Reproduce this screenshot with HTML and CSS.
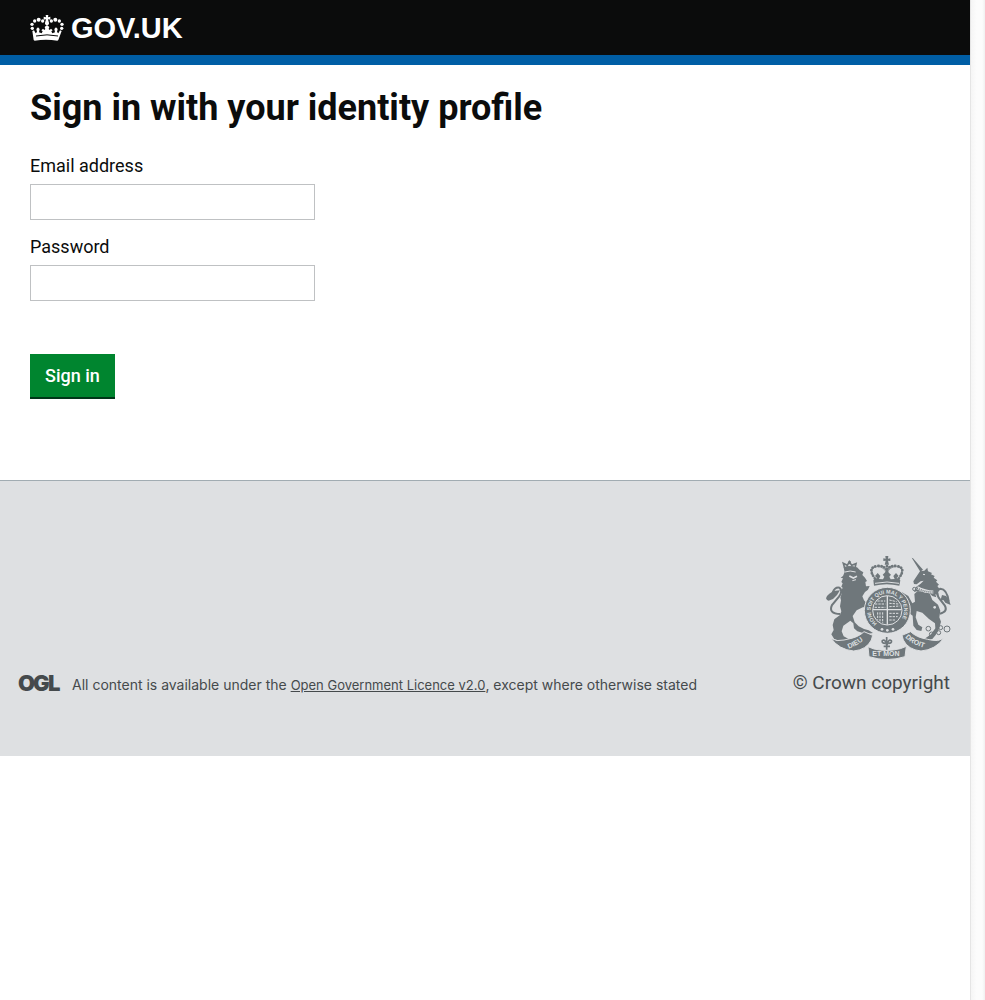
FILE: index.html
```html
<!DOCTYPE html>
<html lang="en">
<head>
<meta charset="utf-8">
<meta name="viewport" content="width=device-width, initial-scale=1">
<title>Sign in with your identity profile</title>
<link rel="stylesheet" href="styles.css">
</head>
<body>
<div class="window">
<div class="page">
  <header class="header">
    <a class="brand" href="#">
      <svg class="brand-crown" viewBox="0 0 102 78" aria-hidden="true">
        <g fill="#fff">
          <path d="M47 0h8l-1 7 7-2v9l-7-1 2 8-2 8h-6l-2-8 2-8-7 1V5l7 2z"/>
          <circle cx="51" cy="25" r="6"/>
          <circle cx="38" cy="18" r="5"/><circle cx="26" cy="14" r="6"/><circle cx="14" cy="18" r="5"/><circle cx="6" cy="28" r="5"/><circle cx="7" cy="40" r="5"/>
          <circle cx="64" cy="18" r="5"/><circle cx="76" cy="14" r="6"/><circle cx="88" cy="18" r="5"/><circle cx="96" cy="28" r="5"/><circle cx="95" cy="40" r="5"/>
          <path d="M7 48l5-2 5 9 4-4-2-9 5-5 5 5-2 10 8 3 3-6-4-3 5-5 4 4 3-3-2-6 7-6 7 6-2 6 3 3 4-4 5 5-4 3 3 6 8-3-2-10 5-5 5 5-2 9 4 4 5-9 5 2-10 27-3 2q-34-6-68 0l-3-2z"/>
        </g>
        <path d="M18 63q33-7 66 0" fill="none" stroke="#0b0c0c" stroke-width="3"/>
      </svg>
      <span>GOV.UK</span>
    </a>
  </header>
  <main class="content">
    <h1>Sign in with your identity profile</h1>
    <form>
      <div class="field">
        <label for="email">Email address</label>
        <input id="email" name="email" type="email">
      </div>
      <div class="field">
        <label for="password">Password</label>
        <input id="password" name="password" type="password">
      </div>
      <button class="submit" type="submit">Sign in</button>
    </form>
  </main>
  <footer class="footer">
    <div class="licence">
      <svg class="ogl" viewBox="0 0 41 18" role="img" aria-label="OGL"><text class="ogl-text" x="-1 14 29" y="16">OGL</text></svg>
      <p>All content is available under the <a href="#">Open Government Licence v2.0</a>, except where otherwise stated</p>
    </div>
    <a class="copyright" href="#">
      <svg class="crest" viewBox="30 30 375 312" aria-hidden="true">
        <defs>
          <path id="garter" d="M186 235A50 50 0 1 1 248 235"/>
          <path id="left-ribbon" d="M101 311Q134 299 158 274"/>
          <path id="right-ribbon" d="M270 277Q296 303 340 311"/>
        </defs>
        <g fill="#6f777b">
          <!-- lion -->
          <path d="M89 81l-5 12-7 5 7 2-5 11 4 4-4 10 4 3-6 13 3 5-4 12 2 8-3 18 4 15-4 11-17 13-5 17 3 15-7 13 9 15 23 6 19 1 1-8-15-8-6-15 5-17 21-15 9 8 2 15 10 9 27 8 20-3-13-8-14-4-16-8-12-12-6-19 12-17 20-10 12 8 4-12-14-16-5-12 8-13 9-7 5-11-11 1-2-13 5-3-6-10-8-8 3-8-10-6-9-9-17-3q-14-2-23 3z"/>
          <path d="M33 160l3-7 7-7 12-8 20-2-9 14-12 12-13 5-5-2z"/>
          <!-- unicorn -->
          <path d="M290 38l4 2 30 34-8 6zM315 79l13-2 9-9 2 11 12 5-3 4 11 5-3 5 11 8-4 4 9 9-5 4 7 10-7 3 4 13-10-1 3 9-12-4-10-10-34-5-11 3 5-14 14-10 10-10-9 2-12 9-8-1-2-8 13-20z"/>
          <path d="M308 138l36 7 8 20 17 14 7 18-3 20 5 13-6 22-10 18-10 12-17 4-6-5 19-13 13-18-1-15-18-13-20-19-17-5-3 19 8 22 12 8-3 11-14-3-10-13-2-30-8-6-5-18-16 4-11-11 10-4 13 2-4-14-19-4-5-11 12-9 20 12 12 22 8-5-2-23z"/>
          <path d="M381 150l12 3 10 14 4 13-9-4-7-3-6-8-9 2z"/>
          <!-- royal crown -->
          <path d="M211 33h9l-1 8 7-1v8l-7-1 3 12h-13l3-12-7 1v-8l7 1z"/>
          <path d="M175 106l11-7-6-6 8-9 8 9-4 9 12 1 4-8-5-6 12-12 13 12-5 6 4 8 12-1-4-9 8-9 8 9-6 6 11 7-3 16q-38-9-76 0z"/>
          <circle cx="217" cy="196" r="69" stroke="#dee0e2" stroke-width="3"/>
          <!-- ribbons -->
          <g stroke="#dee0e2" stroke-width="3">
            <path d="M48 280q17 11 39 5l9-2q35-6 51-23l26 11-4 14q-14 29-53 33-44-4-68-38z"/>
            <path d="M386 280q-17 11-39 5l-9-2q-35-6-51-23l-26 11 4 14q14 29 53 33 44-4 68-38z"/>
            <path d="M159 305l18 7q39 9 79-1l18-7-4 31q-54 17-108 0z"/>
          </g>
        </g>
        <g fill="none" stroke="#6f777b">
          <path d="M90 73l-5-18 12 6 6-11 7 11 13-5-4 17" stroke-width="5"/>
          <path d="M104 48v10M89 75q15-6 32 0M94 67h22" stroke-width="6"/>
          <path d="M76 207q-37-1-25-27l21-25q13-18 1-27-14-2-20 15" stroke-width="6"/>
          <path d="M375 206q25-6 14-25l-18-23q-11-20 5-27 20 1 25 38" stroke-width="6"/>
          <path d="M180 101q-25-34 7-38 22-2 29 15M251 101q25-34-7-38-22-2-29 15M216 63v22" stroke-width="8" stroke-linecap="round" stroke-dasharray="1 8"/>
          <path d="M180 101q-22-34 7-36 22 0 28 22M251 101q22-34-7-36-22 0-28 22" stroke-width="2"/>
          <g stroke-width="3"><circle cx="340" cy="251" r="7"/><circle cx="350" cy="268" r="7"/><circle cx="371" cy="263" r="6"/><circle cx="377" cy="248" r="6"/><circle cx="396" cy="252" r="9"/><circle cx="298" cy="132" r="5"/></g>
          <path d="M215 276v38M206 304h19M215 300q-4-19-13-13-3 8 9 8M216 300q4-19 13-13 3 8-9 8" stroke-width="5"/>
        </g>
        <g fill="none" stroke="#dee0e2">
          <circle cx="217" cy="196" r="44" stroke-width="3"/>
          <path d="M217 153v86M174 194h86" stroke-width="4"/>
          <path d="M187 168h24M180 177h31M179 187h32M223 165l22 5M223 175l28 2M223 185l31-2M188 202v22M195 202v28M203 202v32M223 205h29M223 215h25M223 225h18" stroke-width="3" stroke-dasharray="7 3"/>
          <path d="M180 115q36-8 72 0" stroke-width="3"/>
          <path d="M90 81q15-6 32 0M112 107l11-3" stroke-width="3"/>
          <path d="M103 93l12 6 11-5" stroke-width="5"/>
          <path d="M306 128q24 13 49 13" stroke-width="9"/>
          <path d="M324 88l6 1" stroke-width="3"/>
        </g>
        <path d="M306 129q24 13 49 12" fill="none" stroke="#6f777b" stroke-width="5" stroke-dasharray="3 3"/>
        <g fill="#dee0e2"><circle cx="201" cy="253" r="4"/><circle cx="217" cy="256" r="4"/><circle cx="234" cy="253" r="4"/><circle cx="359" cy="187" r="4"/></g>
        <text class="motto"><textPath href="#garter">HONI SOIT QUI MAL Y PENSE</textPath></text>
        <text class="ribbon-text"><textPath href="#left-ribbon">DIEU</textPath></text>
        <text class="ribbon-text"><textPath href="#right-ribbon">DROIT</textPath></text>
        <text class="ribbon-text" x="172" y="334">ET MON</text>
      </svg>
      <span>© Crown copyright</span>
    </a>
  </footer>
</div>
<div class="gutter" aria-hidden="true"></div>
</div>
</body>
</html>
```
FILE: styles.css
```css
* { box-sizing: border-box; }
body { margin: 0; background: #fff; color: #0b0c0c; font-family: Roboto, "Liberation Sans", sans-serif; font-size: 19px; line-height: 25px; }
.window { display: grid; grid-template-columns: minmax(0, 1fr) 15px; min-height: 100vh; }
.gutter { border-left: 1px solid #e5e5e5; background: linear-gradient(to right, #f5f5f5, #fcfcfc 40%, #fcfcfc 80%, #f0f0f0); }
.header { display: flex; align-items: center; height: 65px; padding: 0 30px; background: #0b0c0c; border-bottom: 10px solid #005ea5; }
.brand { display: flex; align-items: center; gap: 7px; color: #fff; font: bold 29px/30px "Liberation Sans", Arial, sans-serif; text-decoration: none; }
.brand-crown { width: 34px; height: 26px; }
.content { padding: 23px 30px 81px; }
h1 { margin: 0 0 25px; font-size: 36px; line-height: 40px; font-weight: 700; }
.field { display: flex; flex-direction: column; align-items: flex-start; gap: 6px; margin-bottom: 14px; font-size: 18px; }
.field input { width: 285px; max-width: 100%; height: 36px; padding: 5px; border: 1px solid #bfc1c3; border-radius: 0; background: #fff; font: inherit; }
.submit { display: block; margin-top: 53px; height: 45px; padding: 0 15px; border: 0; border-bottom: 2px solid #003618; background: #00852f; color: #fff; font: 500 18px/25px Roboto, sans-serif; }
.footer { display: flex; flex-wrap: wrap; justify-content: space-between; align-items: flex-end; gap: 20px; padding: 74px 20px 61px 19px; border-top: 1px solid #a1acb2; background: #dee0e2; color: #454a4c; }
.licence { display: flex; align-items: flex-start; gap: 12px; font: 14px/20px Inter, Roboto, sans-serif; }
.licence p { margin: 0; }
.licence a { color: inherit; font-size: 13px; }
.ogl { flex: none; width: 41px; height: 18px; overflow: visible; }
.ogl-text { font: 900 22px Inter, sans-serif; fill: #454a4c; }
.copyright { display: flex; flex-direction: column; align-items: flex-end; gap: 11px; color: inherit; text-decoration: none; }
.crest { width: 125px; height: 104px; overflow: visible; }
.motto { font: bold 16px "Liberation Sans", sans-serif; fill: #dee0e2; }
.ribbon-text { font: bold 21px "Liberation Sans", sans-serif; fill: #dee0e2; }
```
